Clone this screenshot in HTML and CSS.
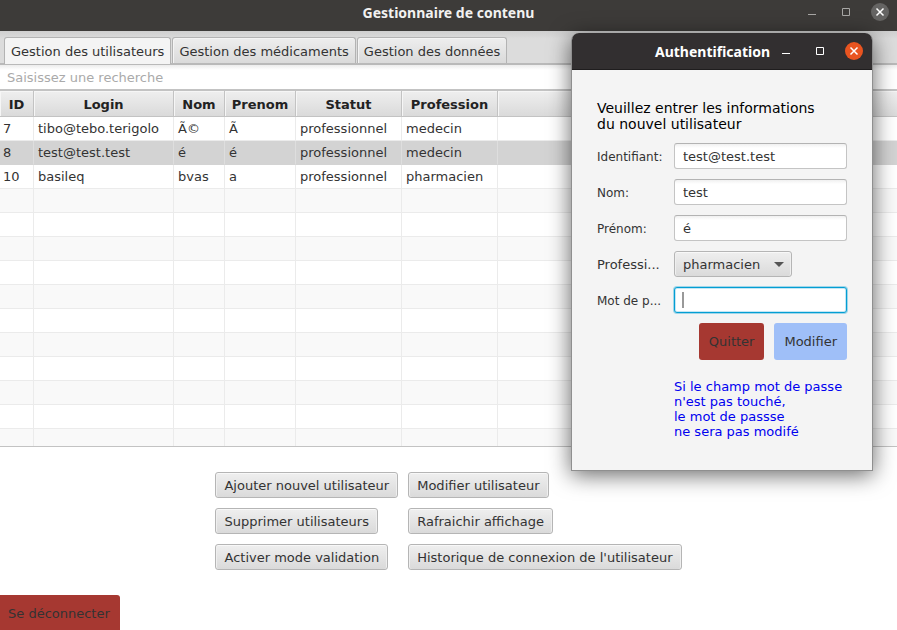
FILE: index.html
```html
<!DOCTYPE html>
<html lang="fr">
<head>
<meta charset="utf-8">
<meta name="viewport" content="width=device-width, initial-scale=1">
<title>Gestionnaire de contenu</title>
<link rel="stylesheet" href="styles.css">
</head>
<body>
<div class="window">
  <header class="titlebar">
    <h1 class="titlebar-text">Gestionnaire de contenu</h1>
    <div class="window-controls">
      <button type="button" class="control" aria-label="Réduire"><svg viewBox="0 0 18 18"><path d="M5 11.5h8"/></svg></button>
      <button type="button" class="control" aria-label="Agrandir"><svg viewBox="0 0 18 18"><path d="M5.5 5.5h7v7h-7z"/></svg></button>
      <button type="button" class="control control-close" aria-label="Fermer"><svg viewBox="0 0 18 18"><path d="M5.5 5.5l7 7M12.5 5.5l-7 7"/></svg></button>
    </div>
  </header>

  <nav class="tabs">
    <button type="button" class="tab tab-active">Gestion des utilisateurs</button>
    <button type="button" class="tab">Gestion des médicaments</button>
    <button type="button" class="tab">Gestion des données</button>
  </nav>

  <input class="search" type="text" placeholder="Saisissez une recherche" aria-label="Recherche">

  <div class="table-view">
    <table class="users">
      <colgroup>
        <col class="col-id"><col class="col-login"><col class="col-nom"><col class="col-prenom"><col class="col-statut"><col class="col-profession"><col>
      </colgroup>
      <thead>
        <tr><th>ID</th><th>Login</th><th>Nom</th><th>Prenom</th><th>Statut</th><th>Profession</th><th></th></tr>
      </thead>
      <tbody>
        <tr><td>7</td><td>tibo@tebo.terigolo</td><td>Ã©</td><td>Ã</td><td>professionnel</td><td>medecin</td><td></td></tr>
        <tr class="selected"><td>8</td><td>test@test.test</td><td>é</td><td>é</td><td>professionnel</td><td>medecin</td><td></td></tr>
        <tr><td>10</td><td>basileq</td><td>bvas</td><td>a</td><td>professionnel</td><td>pharmacien</td><td></td></tr>
        <tr><td></td><td></td><td></td><td></td><td></td><td></td><td></td></tr>
        <tr><td></td><td></td><td></td><td></td><td></td><td></td><td></td></tr>
        <tr><td></td><td></td><td></td><td></td><td></td><td></td><td></td></tr>
        <tr><td></td><td></td><td></td><td></td><td></td><td></td><td></td></tr>
        <tr><td></td><td></td><td></td><td></td><td></td><td></td><td></td></tr>
        <tr><td></td><td></td><td></td><td></td><td></td><td></td><td></td></tr>
        <tr><td></td><td></td><td></td><td></td><td></td><td></td><td></td></tr>
        <tr><td></td><td></td><td></td><td></td><td></td><td></td><td></td></tr>
        <tr><td></td><td></td><td></td><td></td><td></td><td></td><td></td></tr>
        <tr><td></td><td></td><td></td><td></td><td></td><td></td><td></td></tr>
        <tr><td></td><td></td><td></td><td></td><td></td><td></td><td></td></tr>
      </tbody>
    </table>
  </div>

  <div class="actions">
    <button type="button" class="button">Ajouter nouvel utilisateur</button>
    <button type="button" class="button">Modifier utilisateur</button>
    <button type="button" class="button">Supprimer utilisateurs</button>
    <button type="button" class="button">Rafraichir affichage</button>
    <button type="button" class="button">Activer mode validation</button>
    <button type="button" class="button">Historique de connexion de l'utilisateur</button>
  </div>

  <footer class="footer">
    <button type="button" class="flat flat-danger">Se déconnecter</button>
  </footer>
</div>

<section class="dialog" role="dialog" aria-labelledby="dialog-title">
  <header class="dialog-bar">
    <h2 class="titlebar-text" id="dialog-title">Authentification</h2>
    <div class="window-controls">
      <button type="button" class="control" aria-label="Réduire"><svg viewBox="0 0 18 18"><path d="M5 11.5h8"/></svg></button>
      <button type="button" class="control" aria-label="Agrandir"><svg viewBox="0 0 18 18"><path d="M5.5 5.5h7v7h-7z"/></svg></button>
      <button type="button" class="control control-close" aria-label="Fermer"><svg viewBox="0 0 18 18"><path d="M5.5 5.5l7 7M12.5 5.5l-7 7"/></svg></button>
    </div>
  </header>
  <form class="form">
    <p class="intro">Veuillez entrer les informations<br>du nouvel utilisateur</p>
    <label for="identifiant">Identifiant:</label>
    <input class="field" id="identifiant" type="text" value="test@test.test">
    <label for="nom">Nom:</label>
    <input class="field" id="nom" type="text" value="test">
    <label for="prenom">Prénom:</label>
    <input class="field" id="prenom" type="text" value="é">
    <label for="profession" class="label-large">Professi...</label>
    <div class="combo">
      <select class="button" id="profession"><option>pharmacien</option></select>
    </div>
    <label for="mdp">Mot de p...</label>
    <input class="field field-focused" id="mdp" type="password">
    <div class="form-buttons">
      <button type="button" class="flat flat-danger">Quitter</button>
      <button type="button" class="flat flat-primary">Modifier</button>
    </div>
    <p class="note">Si le champ mot de passe<br>n'est pas touché,<br>le mot de passse<br>ne sera pas modifé</p>
  </form>
</section>
</body>
</html>
```

FILE: styles.css
```css
* {
  box-sizing: border-box;
}

body {
  margin: 0;
  background: #fff;
  color: #333;
  font: 13px/16px "DejaVu Sans", sans-serif;
}

button,
input,
select {
  margin: 0;
  color: inherit;
  font: inherit;
}

.window {
  display: flex;
  flex-direction: column;
  height: 100vh;
}

/* Title bars */
.titlebar,
.dialog-bar {
  display: grid;
  grid-template-columns: 1fr auto 1fr;
  align-items: center;
}

.titlebar {
  flex: none;
  height: 31px;
  padding: 0 8px 7px;
  background: #3d3b39;
  color: #f2f1f0;
}

.titlebar-text {
  grid-column: 2;
  margin: 0;
  padding-top: 1px;
  font: bold 14px/20px "Noto Sans", sans-serif;
}

.window-controls {
  display: flex;
  justify-content: flex-end;
  gap: 16px;
}

.control {
  width: 18px;
  height: 18px;
  padding: 0;
  border: 0;
  border-radius: 50%;
  background: none;
  color: #a8a7a5;
}

.control svg {
  display: block;
  fill: none;
  stroke: currentColor;
}

.control-close,
.titlebar .control-close {
  background: #656463;
  color: #fff;
}

.control-close svg {
  stroke-width: 1.5;
}

/* Tabs */
.tabs {
  display: flex;
  flex: none;
  align-items: flex-end;
  gap: 1px;
  height: 34px;
  padding: 0 4px;
  border-bottom: 2px solid #b9b9b9;
  background: linear-gradient(#cfcfcf, #dcdcdc 8px);
}

.tab {
  height: 26px;
  padding: 2px 6px 0;
  border: 1px solid #b3b3b3;
  border-bottom: 0;
  border-radius: 3px 3px 0 0;
  background: linear-gradient(#eee, #dadada);
  box-shadow: inset 1px 1px #f4f4f4;
}

.tab-active {
  height: 27px;
  margin-bottom: -1px;
  background: #f4f4f4;
}

/* Search */
.search {
  flex: none;
  width: 100%;
  height: 24px;
  padding: 0 7px;
  border: 0;
  background: linear-gradient(#ececec, #fff 5px);
  outline: 0;
}

.search::placeholder {
  color: #aaa;
  opacity: 1;
}

/* Table */
.table-view {
  flex: 1 1 0;
  min-height: 0;
  overflow: hidden;
  border: solid #c3c3c3;
  border-width: 2px 0 1px;
}

.users {
  width: 100%;
  table-layout: fixed;
  border-collapse: separate;
  border-spacing: 0;
}

.col-id { width: 34px; }
.col-login { width: 140px; }
.col-nom { width: 51px; }
.col-prenom { width: 71px; }
.col-statut { width: 106px; }
.col-profession { width: 96px; }

.users th {
  height: 26px;
  padding: 2px 0 0;
  border: solid #c3c3c3;
  border-width: 0 1px 1px 0;
  background: linear-gradient(#efefef, #dadada);
  box-shadow: inset 1px 1px #f6f6f6;
  color: #222;
}

.users td {
  height: 24px;
  padding: 0 3px;
  border: solid #ebebeb;
  border-width: 0 1px 1px 0;
  white-space: nowrap;
}

.users td + td {
  padding-left: 4px;
}

.users th:last-child,
.users td:last-child {
  border-right: 0;
}

.users tbody tr:nth-child(n + 4):nth-child(even) {
  background: #f9f9f9;
}

.users .selected {
  background: #d3d3d3;
}

.users .selected td {
  border-right-color: #dedede;
  border-bottom-color: #d3d3d3;
}

/* Standard buttons */
.button {
  height: 26px;
  padding: 2px 8px 0;
  border: 1px solid #b5b5b5;
  border-radius: 3px;
  background: linear-gradient(#efefef, #dadada);
  box-shadow: inset 0 1px #f8f8f8, inset 1px 0 #efefef, inset -1px 0 #efefef;
}

.actions {
  display: grid;
  flex: none;
  grid-template-columns: auto auto;
  justify-content: center;
  justify-items: start;
  gap: 10px;
  padding: 25px 0;
}

.footer {
  display: flex;
  flex: none;
}

.flat {
  padding: 10px;
  border: 0;
  border-radius: 3px;
  line-height: 17px;
}

.flat-danger {
  background: #a63831;
}

.flat-primary {
  background: #9fbff8;
}

.footer .flat {
  height: 35px;
  padding: 2px 10px 0 8px;
  border-radius: 0 3px 0 0;
}

/* Dialog */
.dialog {
  position: absolute;
  top: 33px;
  right: 24px;
  width: 302px;
  border: solid #8f8f8f;
  border-width: 0 1px 1px;
  border-radius: 8px 8px 0 0;
  background: #f4f4f4;
  box-shadow: 0 4px 22px rgba(0, 0, 0, 0.6);
}

.dialog-bar {
  height: 37px;
  padding: 0 9px;
  border-bottom: 1px solid #1f1d1e;
  border-radius: 7px 7px 0 0;
  background: #322f30;
  color: #fff;
  grid-template-columns: 1fr auto auto;
}

.dialog-bar .window-controls {
  margin-left: 7px;
}

.dialog-bar .control {
  color: #fff;
}

.dialog-bar .control-close {
  background: #e95420;
}

.form {
  display: grid;
  grid-template-columns: 67px 1fr;
  align-items: center;
  gap: 10px;
  padding: 30px 25px 31px;
}

.intro,
.note {
  margin: 0;
}

.intro {
  grid-column: 1 / -1;
  padding-bottom: 1px;
  color: #000;
  font-size: 14px;
}

.form label {
  padding-top: 1px;
  font-size: 12px;
  white-space: nowrap;
}

.form .label-large {
  font-size: 13px;
}

.field {
  width: 100%;
  height: 26px;
  padding: 0 8px;
  border: 1px solid #c4c4c4;
  border-top-color: #b3b3b3;
  border-radius: 3px;
  background: linear-gradient(#f0f0f0, #fff 4px);
  outline: 0;
}

/* The focused field shows its insertion bar at the text origin. */
.field-focused {
  border-color: #039ed3;
  background:
    linear-gradient(#999, #999) 7px center / 2px 16px no-repeat,
    #fff;
  box-shadow: 0 0 0 1px rgba(3, 158, 211, 0.35), inset 0 0 0 1px #c4e6f4;
}

.combo {
  position: relative;
  justify-self: start;
}

.combo .button {
  display: block;
  padding-right: 30px;
  appearance: none;
}

.combo::after {
  position: absolute;
  top: 11px;
  right: 8px;
  border: solid transparent;
  border-width: 5px 5px 0;
  border-top-color: #555;
  content: "";
  pointer-events: none;
}

.form-buttons {
  display: flex;
  grid-column: 1 / -1;
  justify-content: flex-end;
  gap: 10px;
}

.note {
  grid-column: 2;
  padding-top: 9px;
  color: #0000f0;
  line-height: 15px;
  white-space: nowrap;
}
```
